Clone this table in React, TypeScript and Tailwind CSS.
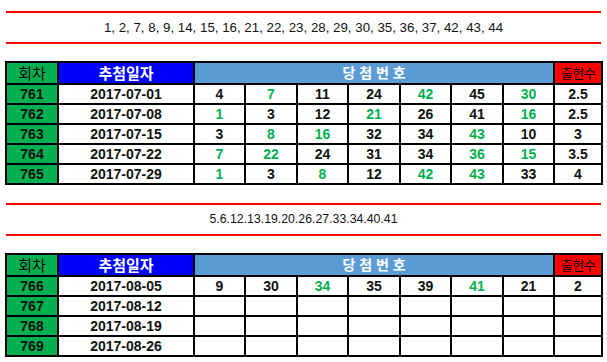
type Cell = { n: string; g?: boolean };

const g = (n: string): Cell => ({ n, g: true });
const b = (n: string): Cell => ({ n });

const block1 = {
  nums: "1, 2, 7, 8, 9, 14, 15, 16, 21, 22, 23, 28, 29, 30, 35, 36, 37, 42, 43, 44",
  numsClass: "text-[13.3px]",
  rows: [
    { no: "761", date: "2017-07-01", cells: [b("4"), g("7"), b("11"), b("24"), g("42"), b("45"), g("30")], cnt: "2.5" },
    { no: "762", date: "2017-07-08", cells: [g("1"), b("3"), b("12"), g("21"), b("26"), b("41"), g("16")], cnt: "2.5" },
    { no: "763", date: "2017-07-15", cells: [b("3"), g("8"), g("16"), b("32"), b("34"), g("43"), b("10")], cnt: "3" },
    { no: "764", date: "2017-07-22", cells: [g("7"), g("22"), b("24"), b("31"), b("34"), g("36"), g("15")], cnt: "3.5" },
    { no: "765", date: "2017-07-29", cells: [g("1"), b("3"), g("8"), b("12"), g("42"), g("43"), b("33")], cnt: "4" },
  ],
};

const block2 = {
  nums: "5.6.12.13.19.20.26.27.33.34.40.41",
  numsClass: "text-[12.3px]",
  rows: [
    { no: "766", date: "2017-08-05", cells: [b("9"), b("30"), g("34"), b("35"), b("39"), g("41"), b("21")], cnt: "2" },
    { no: "767", date: "2017-08-12", cells: [b(""), b(""), b(""), b(""), b(""), b(""), b("")], cnt: "" },
    { no: "768", date: "2017-08-19", cells: [b(""), b(""), b(""), b(""), b(""), b(""), b("")], cnt: "" },
    { no: "769", date: "2017-08-26", cells: [b(""), b(""), b(""), b(""), b(""), b(""), b("")], cnt: "" },
  ],
};

const numWidths = ["w-[51px]", "w-[52px]", "w-[51px]", "w-[52px]", "w-[51px]", "w-[52px]", "w-[51px]"];

const td = "border-2 border-black text-center p-0 leading-none whitespace-nowrap";

function Block({ data }: { data: typeof block1 }) {
  return (
    <div>
      <div className="ml-[6px] w-[595px] h-[2px] bg-[#ff0000]" />
      <div className={`h-[29px] flex items-center justify-center text-[#111] ${data.numsClass}`}>
        {data.nums}
      </div>
      <div className="ml-[6px] w-[595px] h-[2px] bg-[#ff0000]" />
      <table className="mt-[17px] ml-[5px] w-[596px] table-fixed border-collapse border-2 border-black font-bold text-[14px]">
        <colgroup>
          <col className="w-[52px]" />
          <col className="w-[136px]" />
          {numWidths.map((w, i) => (
            <col key={i} className={w} />
          ))}
          <col className="w-[48px]" />
        </colgroup>
        <thead>
          <tr className="h-[22px]">
            <td className={`${td} bg-[#00b050] text-black font-normal text-[15px]`}>회차</td>
            <td className={`${td} bg-[#0000ff] text-white text-[15px]`}>추첨일자</td>
            <td colSpan={7} className={`${td} bg-[#5b9bd5] text-white text-[14px]`}>
              당 첨 번 호
            </td>
            <td className={`${td} bg-[#ff0000] text-black font-normal text-[13px] tracking-[-0.5px]`}>출현수</td>
          </tr>
        </thead>
        <tbody>
          {data.rows.map((r) => (
            <tr key={r.no} className="h-[20px]">
              <td className={`${td} bg-[#00b050] text-[#111]`}>{r.no}</td>
              <td className={`${td} bg-white text-[#111]`}>{r.date}</td>
              {r.cells.map((c, i) => (
                <td key={i} className={`${td} bg-white ${c.g ? "text-[#00b050]" : "text-[#111]"}`}>
                  {c.n}
                </td>
              ))}
              <td className={`${td} bg-white text-[#111]`}>{r.cnt}</td>
            </tr>
          ))}
        </tbody>
      </table>
    </div>
  );
}

export default function App() {
  return (
    <div
      className="w-[607px] h-[362px] bg-white pt-[11px] overflow-hidden"
      style={{ fontFamily: '"Liberation Sans", "Noto Sans CJK KR", sans-serif' }}
    >
      <Block data={block1} />
      <div className="h-[18px]" />
      <Block data={block2} />
    </div>
  );
}
